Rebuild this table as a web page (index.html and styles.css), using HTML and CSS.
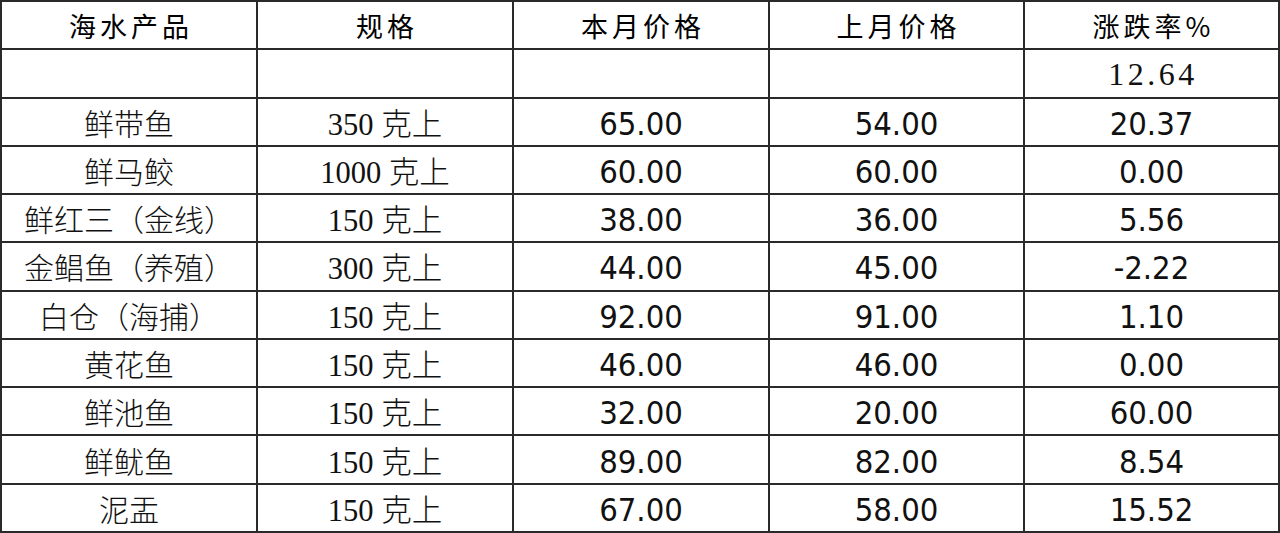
FILE: index.html
```html
<!DOCTYPE html>
<html lang="zh-CN">
<head>
<meta charset="utf-8">
<title>海水产品价格</title>
<link rel="stylesheet" href="styles.css">
</head>
<body>
<div class="table">
  <div class="cell head">海水产品</div>
  <div class="cell head">规格</div>
  <div class="cell head">本月价格</div>
  <div class="cell head">上月价格</div>
  <div class="cell head">涨跌率%</div>

  <div class="cell"></div>
  <div class="cell"></div>
  <div class="cell"></div>
  <div class="cell"></div>
  <div class="cell avg">12.64</div>

  <div class="cell name">鲜带鱼</div>
  <div class="cell spec">350 克上</div>
  <div class="cell num">65.00</div>
  <div class="cell num">54.00</div>
  <div class="cell num">20.37</div>

  <div class="cell name">鲜马鲛</div>
  <div class="cell spec">1000 克上</div>
  <div class="cell num">60.00</div>
  <div class="cell num">60.00</div>
  <div class="cell num">0.00</div>

  <div class="cell name">鲜红三（金线）</div>
  <div class="cell spec">150 克上</div>
  <div class="cell num">38.00</div>
  <div class="cell num">36.00</div>
  <div class="cell num">5.56</div>

  <div class="cell name">金鲳鱼（养殖）</div>
  <div class="cell spec">300 克上</div>
  <div class="cell num">44.00</div>
  <div class="cell num">45.00</div>
  <div class="cell num">-2.22</div>

  <div class="cell name">白仓（海捕）</div>
  <div class="cell spec">150 克上</div>
  <div class="cell num">92.00</div>
  <div class="cell num">91.00</div>
  <div class="cell num">1.10</div>

  <div class="cell name">黄花鱼</div>
  <div class="cell spec">150 克上</div>
  <div class="cell num">46.00</div>
  <div class="cell num">46.00</div>
  <div class="cell num">0.00</div>

  <div class="cell name">鲜池鱼</div>
  <div class="cell spec">150 克上</div>
  <div class="cell num">32.00</div>
  <div class="cell num">20.00</div>
  <div class="cell num">60.00</div>

  <div class="cell name">鲜鱿鱼</div>
  <div class="cell spec">150 克上</div>
  <div class="cell num">89.00</div>
  <div class="cell num">82.00</div>
  <div class="cell num">8.54</div>

  <div class="cell name">泥盂</div>
  <div class="cell spec">150 克上</div>
  <div class="cell num">67.00</div>
  <div class="cell num">58.00</div>
  <div class="cell num">15.52</div>
</div>
</body>
</html>
```

FILE: styles.css
```css
html, body {
  margin: 0;
  padding: 0;
  background: #ffffff;
}

.table {
  box-sizing: border-box;
  width: 1280px;
  height: 533px;
  display: grid;
  grid-template-columns: 254px 254px 254px 253px 1fr;
  grid-template-rows: repeat(11, 1fr);
  gap: 2px;
  padding: 2px 2px 2px 2px;
  background: #2a2a2a;
}

.cell {
  background: #ffffff;
  display: flex;
  align-items: center;
  justify-content: center;
  color: #111111;
  white-space: nowrap;
  overflow: hidden;
}

.head {
  font-family: "Noto Sans CJK SC", sans-serif;
  font-size: 27px;
  font-weight: 400;
  letter-spacing: 4px;
  padding-left: 4px;
  color: #000000;
}

.avg {
  font-family: "Liberation Serif", serif;
  font-size: 32px;
  letter-spacing: 3.5px;
  padding-top: 2px;
  padding-left: 3px;
}

.name {
  font-family: "Noto Sans CJK SC", sans-serif;
  font-size: 30px;
  font-weight: 300;
}

.spec {
  font-family: "Liberation Serif", "Noto Sans CJK SC", serif;
  font-size: 30.5px;
  font-weight: 300;
}

.num {
  font-family: "DejaVu Sans Condensed", "DejaVu Sans", sans-serif;
  font-stretch: condensed;
  font-size: 32.5px;
  padding-top: 4px;
}
```
